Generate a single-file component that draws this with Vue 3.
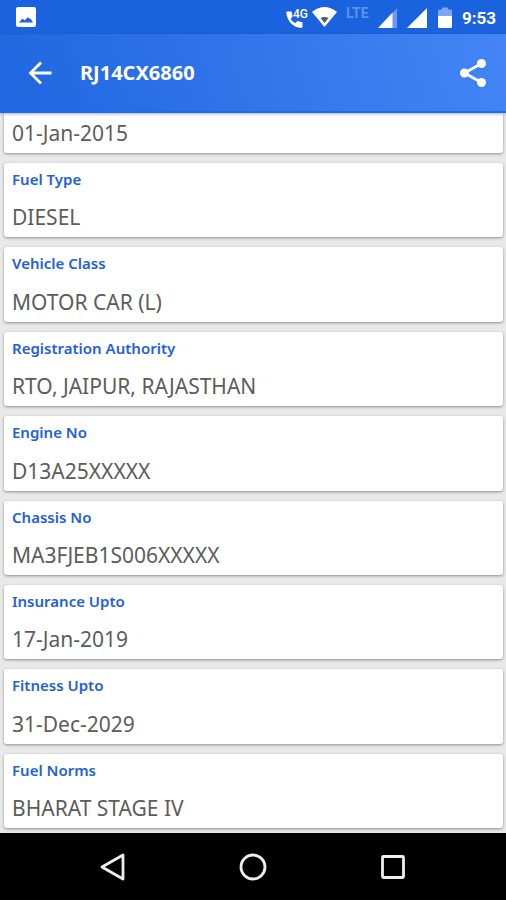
<script setup>
const details = [
  { label: 'Fuel Type', value: 'DIESEL' },
  { label: 'Vehicle Class', value: 'MOTOR CAR (L)' },
  { label: 'Registration Authority', value: 'RTO, JAIPUR, RAJASTHAN' },
  { label: 'Engine No', value: 'D13A25XXXXX' },
  { label: 'Chassis No', value: 'MA3FJEB1S006XXXXX' },
  { label: 'Insurance Upto', value: '17-Jan-2019' },
  { label: 'Fitness Upto', value: '31-Dec-2029' },
  { label: 'Fuel Norms', value: 'BHARAT STAGE IV' },
]
</script>

<template>
  <div class="screen">
    <div class="status">
      <svg class="photo" width="20" height="20" viewBox="0 0 20 20">
        <rect width="20" height="20" rx="2" fill="#fff" />
        <path d="M3 15.500 L6.500 11.500 L8.500 13.500 L12 10 L13.500 12 L14.500 11.500 L17 15.500 Z" fill="#1b63de" />
      </svg>
      <div class="indicators">
        <svg width="222" height="34" viewBox="0 0 222 34">
          <path d="M3.500 11.500 h4 l1.200 5 -2 2.200 c1 2 2.600 3.400 4.600 4.400 l2.200 -2 5 1.200 v4.200 c0 .9 -.5 1.400 -1.300 1.400 C9.500 27.800 3 21 2.300 12.700 c0 -.7 .5 -1.200 1.200 -1.200z" fill="#fff" />
          <text x="9" y="18" class="net">4G</text>
          <path d="M28 12 Q40.500 2 53 12 L40.500 27 Z" fill="#fff" />
          <path d="M36.500 18 Q40.500 16 44.500 18 L40.500 23 Z" fill="#555b68" />
          <text x="62" y="18" class="lte">LTE</text>
          <path d="M108 13.500 L113 8.500 V28 H108 Z" fill="#6b9aec" />
          <path d="M94 28 L108.500 12.500 V28 Z" fill="#fff" />
          <path d="M123 28 L143 8 V28 Z" fill="#fff" />
          <path d="M154 16 V11 q0 -1.500 1.500 -1.500 H158 V7.500 h6 V9.500 h2.500 q1.500 0 1.500 1.500 V16 Z" fill="#7ba6f0" />
          <path d="M154 16 H168 V26.500 q0 1.500 -1.500 1.500 H155.500 q-1.500 0 -1.500 -1.500 Z" fill="#fff" />
          <text x="178" y="24" class="clock">9:53</text>
        </svg>
      </div>
    </div>

    <header class="bar">
      <button class="icon" type="button" aria-label="Back">
        <svg width="24" height="24" viewBox="0 0 24 24" fill="none" stroke="#fff" stroke-width="2.800">
          <path d="M13 1.500 L2.500 12 L13 22.500 M2.500 12 H23.500" />
        </svg>
      </button>
      <h1>RJ14CX6860</h1>
      <button class="icon" type="button" aria-label="Share">
        <svg width="28" height="30" viewBox="0 0 28 30">
          <path d="M22.500 5.500 L5.500 15 L22.500 24.500" fill="none" stroke="#fff" stroke-width="2.700" />
          <g fill="#fff">
            <circle cx="22.500" cy="5.500" r="4.500" />
            <circle cx="5.500" cy="15" r="4.500" />
            <circle cx="22.500" cy="24.500" r="4.500" />
          </g>
        </svg>
      </button>
    </header>

    <main class="list">
      <section class="card partial"><p class="value">01-Jan-2015</p></section>
      <section v-for="d in details" :key="d.label" class="card">
        <h2 class="label">{{ d.label }}</h2>
        <p class="value">{{ d.value }}</p>
      </section>
    </main>

    <nav class="keys">
      <button type="button" aria-label="System back">
        <svg width="28" height="28" viewBox="0 0 28 28"><path d="M24 2 V26 L3 14 Z" /></svg>
      </button>
      <button type="button" aria-label="Home">
        <svg width="28" height="28" viewBox="0 0 28 28"><circle cx="14" cy="14" r="12" /></svg>
      </button>
      <button type="button" aria-label="Recent apps">
        <svg width="28" height="28" viewBox="0 0 28 28"><rect x="3.500" y="3.500" width="21" height="21" rx="1" /></svg>
      </button>
    </nav>
  </div>
</template>

<style>
body {
  margin: 0;
}
</style>

<style scoped>
.screen {
  display: flex;
  flex-direction: column;
  min-height: 100vh;
  background: #e9e9e9;
  font-family: "Noto Sans", "Open Sans", sans-serif;
}
.status {
  display: flex;
  align-items: center;
  justify-content: space-between;
  height: 34px;
  padding: 0 0 0 16px;
  background: #1b63de;
}
.status svg {
  display: block;
}
.net,
.lte,
.clock {
  font-family: Roboto, sans-serif;
  fill: #fff;
}
.net {
  font-size: 12px;
  font-weight: 500;
}
.lte {
  font-size: 14px;
  font-weight: 700;
  fill: #5f90ea;
}
.clock {
  font-size: 17px;
  font-weight: 700;
}
.bar {
  position: relative;
  display: flex;
  align-items: center;
  box-sizing: border-box;
  height: 79px;
  padding: 0 19px 0 28px;
  background: linear-gradient(75deg, #1f66e0, #4385f5);
  border-bottom: 2px solid #1b6df0;
  box-shadow: 0 1px 3px rgba(0, 0, 0, 0.3);
}
.icon {
  display: flex;
  padding: 0;
  border: 0;
  background: none;
}
h1 {
  flex: 1;
  margin: 0 0 0 28px;
  color: #fff;
  font-size: 20px;
  font-weight: 700;
  line-height: 28px;
}
.list {
  display: flex;
  flex: 1;
  flex-direction: column;
  gap: 10px;
  padding: 0 3px 5px 4px;
}
.card {
  display: flex;
  flex: 1;
  flex-direction: column;
  justify-content: space-between;
  box-sizing: border-box;
  padding: 6px 8px 7px;
  border-radius: 3px;
  background: #fff;
  box-shadow: 0 1px 3px rgba(0, 0, 0, 0.4);
}
.partial {
  flex: none;
  border-radius: 0 0 3px 3px;
}
.partial .value {
  padding-top: 1px;
}
.label {
  margin: 0;
  color: #2460d8;
  font-size: 15px;
  font-weight: 600;
  line-height: 20px;
}
.value {
  margin: 0;
  color: #5c5c5c;
  font-size: 21px;
  line-height: 26px;
}
.keys {
  display: flex;
  align-items: center;
  justify-content: center;
  gap: 112px;
  height: 67px;
  background: #000;
}
.keys button {
  display: flex;
  padding: 0;
  border: 0;
  background: none;
}
.keys svg {
  fill: none;
  stroke: #eee;
  stroke-width: 2.800;
  stroke-linejoin: round;
}
</style>
